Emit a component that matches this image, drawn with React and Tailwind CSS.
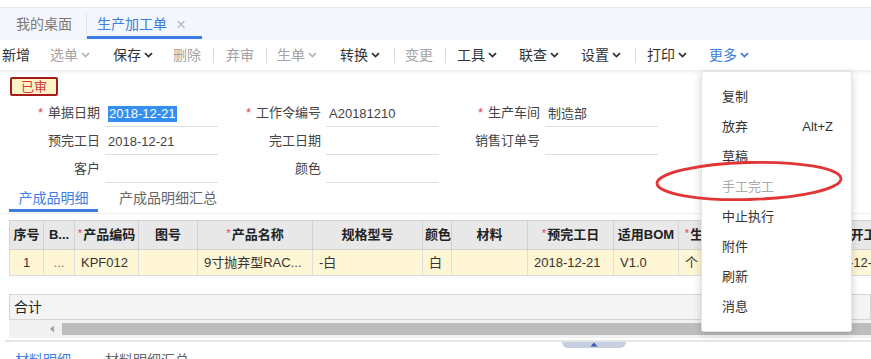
import React from 'react'

const font = { fontFamily: '"Liberation Sans", "Noto Sans CJK SC", sans-serif' }

function Chevron({ className = '' }) {
  return (
    <svg width="9" height="6" viewBox="0 0 9 6" className={className}>
      <path d="M1 1.2 L4.5 4.6 L8 1.2" fill="none" stroke="currentColor" strokeWidth="1.8" />
    </svg>
  )
}

function ToolItem({ label, ml, muted, drop, blue }) {
  const color = blue ? 'text-[#3b7de0]' : muted ? 'text-[#a3a3a3]' : 'text-[#333]'
  return (
    <div className={`flex items-center gap-[3px] ${color}`} style={{ marginLeft: ml }}>
      <span>{label}</span>
      {drop && <Chevron className={muted ? 'text-[#b5b5b5]' : blue ? 'text-[#3b7de0]' : 'text-[#333]'} />}
    </div>
  )
}

function Sep({ ml }) {
  return <div className="w-px h-[15px] bg-[#dcdcdc]" style={{ marginLeft: ml }} />
}

function Field({ label, req, value, labelW, selected }) {
  return (
    <div className="flex items-end h-[28px]">
      <div className="text-right text-[#444] pb-[5px]" style={{ width: labelW }}>
        {req && <span className="text-[#e0455a] mr-[5px]">*</span>}
        {label}
      </div>
      <div className="ml-[5px] w-[113px] h-[25px] border-b border-[#dedede] flex items-center pl-[3px] text-[#444]">
        {value && (
          <span className={selected ? 'bg-[#3390f0] text-white leading-[16px] px-px' : ''}>{value}</span>
        )}
      </div>
    </div>
  )
}

const cols = [
  { w: 34, h: '序号', d: '1', dc: 'text-center' },
  { w: 31, h: 'B...', d: '...', dc: 'text-center text-[#777]' },
  { w: 64, h: '产品编码', req: true, d: 'KPF012' },
  { w: 59, h: '图号', d: '' },
  { w: 115, h: '产品名称', req: true, d: '9寸抛弃型RAC...' },
  { w: 110, h: '规格型号', d: '-白' },
  { w: 29, h: '颜色', d: '白' },
  { w: 76, h: '材料', d: '' },
  { w: 86, h: '预完工日', req: true, d: '2018-12-21' },
  { w: 65, h: '适用BOM', d: 'V1.0' },
  { w: 70, h: '生产单位', req: true, d: '个' },
  { w: 65, h: '生产数量', req: true, d: '1' },
  { w: 100, h: '计划开工日期', d: '2018-12-21' },
]

const menu = [
  { t: '复制' },
  { t: '放弃', k: 'Alt+Z' },
  { t: '草稿' },
  { t: '手工完工', off: true },
  { t: '中止执行' },
  { t: '附件' },
  { t: '刷新' },
  { t: '消息' },
]

export default function App() {
  return (
    <div className="relative w-[871px] h-[359px] overflow-hidden bg-white text-[13px]" style={font}>
      {/* 标签栏 */}
      <div className="h-[8px] border-b border-[#e6e8ee]" />
      <div className="h-[32px] bg-[#f3f6fc] flex items-stretch text-[14px]">
        <div className="pl-[16px] pr-[14px] flex items-center text-[#7a7a7a]">我的桌面</div>
        <div className="w-px h-[20px] bg-[#dde1ea] self-center" />
        <div className="relative flex items-center pl-[10px] w-[115px]">
          <span className="text-[#3b7de0]">生产加工单</span>
          <span className="ml-[9px] text-[#b8b8b8] text-[17px] leading-none">×</span>
          <div className="absolute left-0 right-0 bottom-[1px] h-[3px] bg-[#3b7de0]" />
        </div>
      </div>

      {/* 工具栏 */}
      <div className="h-[30px] flex items-center text-[14px] shadow-[0_2px_3px_rgba(0,0,0,0.08)] relative">
        <ToolItem label="新增" ml={2} />
        <ToolItem label="选单" ml={20} muted drop />
        <ToolItem label="保存" ml={23} drop />
        <ToolItem label="删除" ml={20} muted />
        <Sep ml={12} />
        <ToolItem label="弃审" ml={12} muted />
        <Sep ml={12} />
        <ToolItem label="生单" ml={10} muted drop />
        <ToolItem label="转换" ml={23} drop />
        <Sep ml={14} />
        <ToolItem label="变更" ml={10} muted />
        <Sep ml={12} />
        <ToolItem label="工具" ml={11} drop />
        <ToolItem label="联查" ml={22} drop />
        <ToolItem label="设置" ml={22} drop />
        <Sep ml={14} />
        <ToolItem label="打印" ml={11} drop />
        <ToolItem label="更多" ml={22} blue drop />
      </div>

      {/* 表头 */}
      <div className="pt-[7px]">
        <div className="ml-[10px] w-[48px] h-[19px] border-2 border-[#a81c1c] rounded-[2px] bg-[#fdf3c8] text-[#d43a3a] text-[13px] leading-[15px] text-center">
          已审
        </div>
        <div className="mt-[3px] flex">
          <div className="w-[218px]">
            <Field label="单据日期" req value="2018-12-21" labelW={100} selected />
            <Field label="预完工日" value="2018-12-21" labelW={100} />
            <Field label="客户" labelW={100} />
          </div>
          <div className="w-[222px]">
            <Field label="工作令编号" req value="A20181210" labelW={103} />
            <Field label="完工日期" labelW={103} />
            <Field label="颜色" labelW={103} />
          </div>
          <div className="w-[220px]">
            <Field label="生产车间" req value="制造部" labelW={100} />
            <Field label="销售订单号" labelW={100} />
          </div>
        </div>
      </div>

      {/* 子标签 */}
      <div className="h-[31px] flex items-stretch text-[14px] border-b border-[#eeeeee]">
        <div className="relative ml-[9px] w-[89px] flex items-center justify-center text-[#3b7de0]">
          产成品明细
          <div className="absolute left-0 right-0 bottom-[1px] h-[3px] bg-[#3b7de0]" />
        </div>
        <div className="ml-[21px] flex items-center text-[#666]">产成品明细汇总</div>
      </div>

      {/* 表格 */}
      <div className="mt-[6px] ml-[9px]">
        <table className="table-fixed border-collapse" style={{ width: 904 }}>
          <colgroup>
            {cols.map((c, i) => (
              <col key={i} style={{ width: c.w }} />
            ))}
          </colgroup>
          <thead>
            <tr className="h-[29px] bg-[#e8e8e8]">
              {cols.map((c, i) => (
                <th key={i} className="border border-[#d2d2d2] font-bold text-[#222] text-center whitespace-nowrap overflow-hidden px-[2px]">
                  {c.req && <span className="text-[#e0455a] font-normal text-[11px] align-top mr-px">*</span>}
                  {c.h}
                </th>
              ))}
            </tr>
          </thead>
          <tbody>
            <tr className="h-[26px] bg-[#fff6d5]">
              {cols.map((c, i) => (
                <td key={i} className={`border border-[#dcdcdc] text-[#333] whitespace-nowrap overflow-hidden px-[6px] ${c.dc || ''}`}>
                  {c.d}
                </td>
              ))}
            </tr>
          </tbody>
        </table>

        <div className="mt-[18px] h-[26px] bg-[#f4f4f4] border border-[#d4d4d4] flex items-center pl-[4px] text-[14px] text-[#222]">
          合计
        </div>
        <div className="h-[18px] bg-[#f1f1f1] flex items-center">
          <svg width="6" height="8" viewBox="0 0 6 8" className="ml-[40px]">
            <path d="M5 0.5 L1 4 L5 7.5 Z" fill="#a0a0a0" />
          </svg>
          <div className="ml-[7px] flex-1 h-[12px] bg-[#bdbdbd]" />
        </div>
      </div>

      {/* 分隔 */}
      <div className="mt-[2px] h-[2px] bg-[#e6e6e6] ml-[5px]" />
      <div className="relative">
        <div className="absolute left-[562px] top-0 w-[64px] h-[6px] rounded-b-[6px] bg-[#c5cfdf] flex justify-center">
          <svg width="8" height="5" viewBox="0 0 8 5">
            <path d="M0.5 4.5 L4 0.5 L7.5 4.5 Z" fill="#3a5ea8" />
          </svg>
        </div>
      </div>
      <div className="mt-[8px] flex text-[14px]">
        <span className="ml-[15px] text-[#3b7de0]">材料明细</span>
        <span className="ml-[34px] text-[#666]">材料明细汇总</span>
      </div>

      {/* 更多 下拉菜单 */}
      <div className="absolute left-[701px] top-[71px] w-[151px] h-[261px] bg-white rounded-[3px] border border-[#e4e4e4] shadow-[0_2px_8px_rgba(0,0,0,0.18)] pt-[10px]">
        {menu.map((m) => (
          <div key={m.t} className={`h-[30px] flex items-center justify-between pl-[20px] pr-[18px] ${m.off ? 'text-[#ababab]' : 'text-[#333]'}`}>
            <span>{m.t}</span>
            {m.k && <span>{m.k}</span>}
          </div>
        ))}
      </div>

      {/* 红色圈注 */}
      <svg className="absolute left-[650px] top-[155px] pointer-events-none" width="200" height="52" viewBox="0 0 200 52">
        <ellipse cx="99" cy="26" rx="92" ry="18.5" fill="none" stroke="#e23535" strokeWidth="2.8" transform="rotate(-1.5 99 26)" />
      </svg>
    </div>
  )
}
